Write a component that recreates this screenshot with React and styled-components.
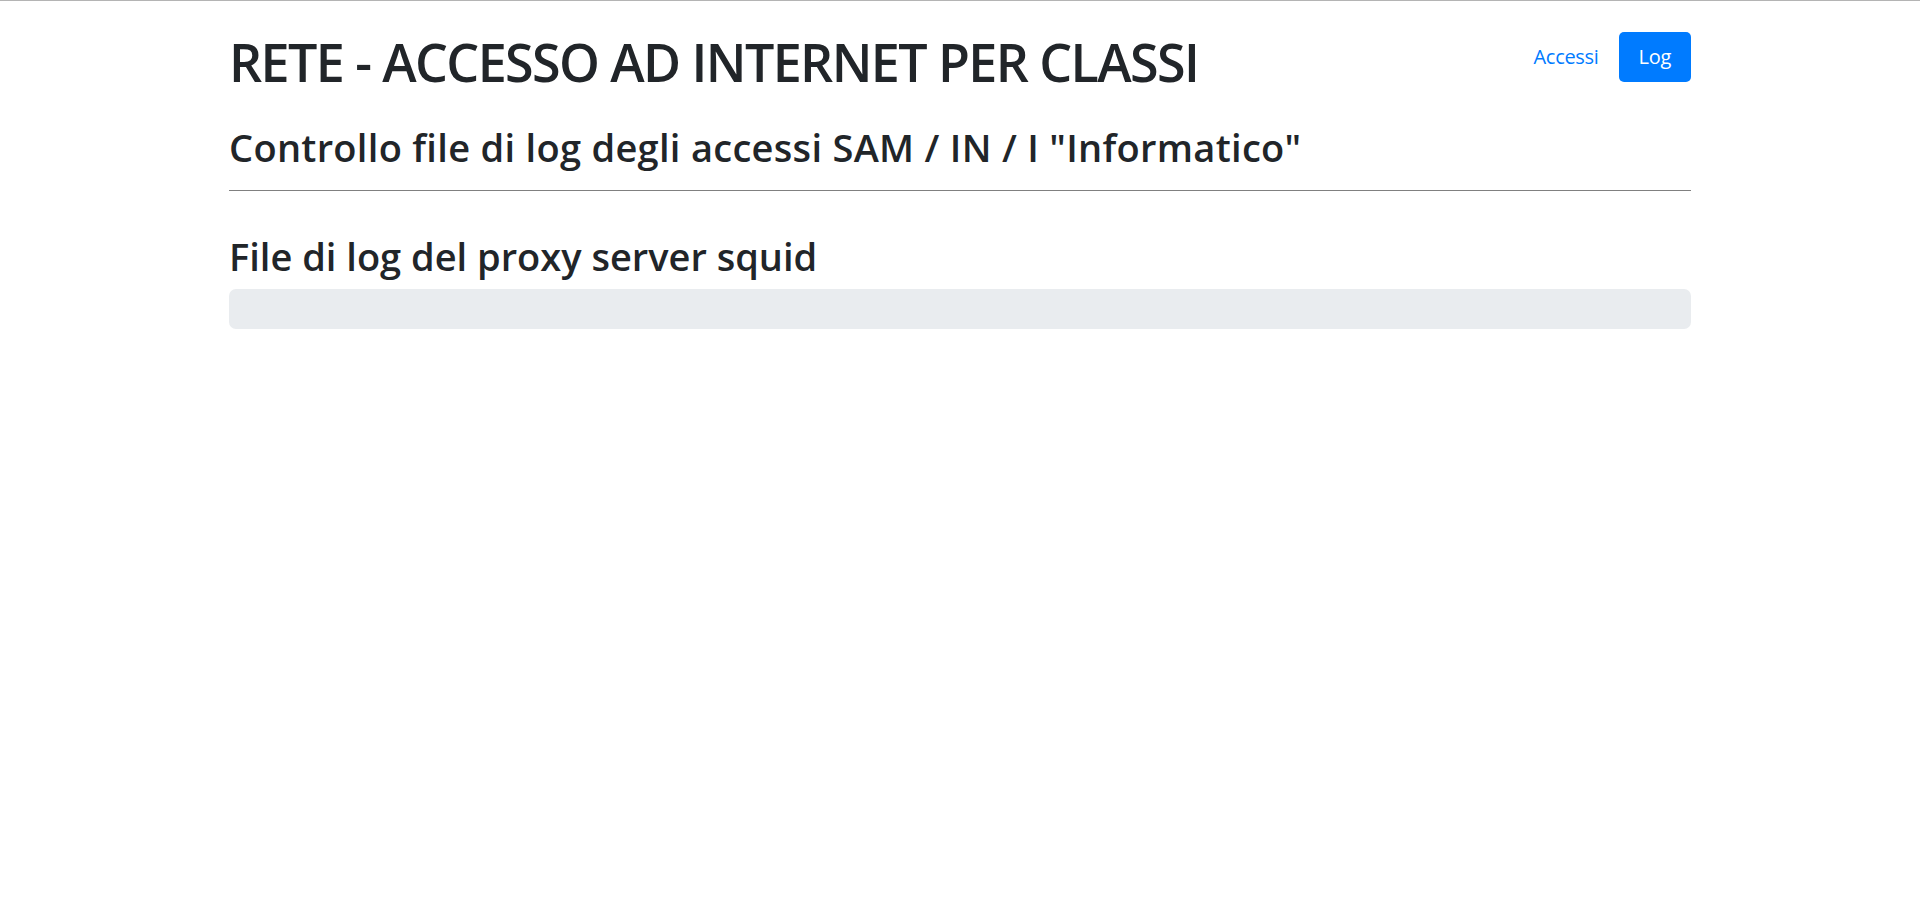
import React from 'react'
import styled, { createGlobalStyle } from 'styled-components'

const GlobalStyle = createGlobalStyle`
  html, body {
    margin: 0;
    padding: 0;
    background: #fff;
  }
  body {
    border-top: 1px solid #b4b4b4;
    font-family: "Open Sans", "Noto Sans", sans-serif;
    color: #212529;
  }
`

const Container = styled.div`
  width: 1462px;
  margin: 0 auto;
`

const Header = styled.header`
  display: flex;
  justify-content: space-between;
  align-items: flex-start;
  padding-top: 30px;
`

const Title = styled.h1`
  margin: 0;
  font-size: 52px;
  line-height: 62px;
  font-weight: 600;
  letter-spacing: -1.6px;
`

const Nav = styled.nav`
  display: flex;
  align-items: center;
  margin-top: 1px;
`

const NavLink = styled.a`
  display: block;
  padding: 0 20px;
  font-size: 20px;
  line-height: 50px;
  letter-spacing: -0.3px;
  text-decoration: none;
  border-radius: 5px;
  color: ${(p) => (p.active ? '#fff' : '#007bff')};
  background: ${(p) => (p.active ? '#007bff' : 'transparent')};
`

const SectionTitle = styled.h3`
  margin: ${(p) => p.top}px 0 0;
  font-size: 38px;
  line-height: 46px;
  font-weight: 600;
  letter-spacing: ${(p) => p.spacing || 0}px;
`

const Rule = styled.hr`
  margin: 20px 0 0;
  border: 0;
  border-top: 1px solid #808080;
`

const LogBox = styled.pre`
  margin: 10px 0 0;
  height: 40px;
  background: #e9ecef;
  border-radius: 7px;
`

export default function App() {
  return (
    <>
      <GlobalStyle />
      <Container>
        <Header>
          <Title>RETE - ACCESSO AD INTERNET PER CLASSI</Title>
          <Nav>
            <NavLink href="#">Accessi</NavLink>
            <NavLink href="#" active>
              Log
            </NavLink>
          </Nav>
        </Header>
        <SectionTitle top={31} spacing={0.3}>
          Controllo file di log degli accessi SAM / IN / I "Informatico"
        </SectionTitle>
        <Rule />
        <SectionTitle top={42}>File di log del proxy server squid</SectionTitle>
        <LogBox />
      </Container>
    </>
  )
}
